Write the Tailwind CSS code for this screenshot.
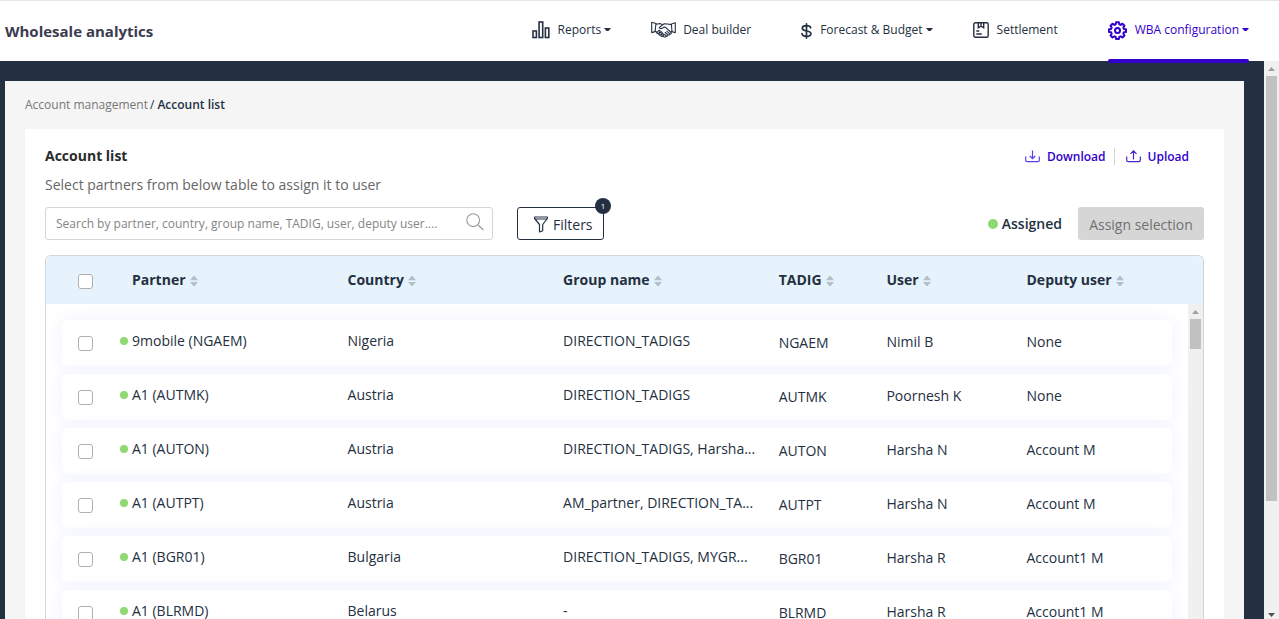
<!DOCTYPE html>
<html lang="en">
<head>
<meta charset="utf-8">
<title>Wholesale analytics</title>
<script src="https://cdn.jsdelivr.net/npm/@tailwindcss/browser@4"></script>
</head>
<body class="flex h-screen flex-col overflow-hidden bg-white font-['Open_Sans','Noto_Sans',sans-serif] text-sm text-[#243041]">
<header class="flex h-[61px] shrink-0 items-center justify-between border-t border-[#e1e8e8] pr-[30px] pl-[5px]">
  <h1 class="pt-0.5 text-[15px] font-bold text-[#3b3b50]">Wholesale analytics</h1>
  <nav class="flex h-full gap-10 pb-[3px] text-xs" aria-label="Main">
    <a href="#" class="flex items-center">
      <svg class="mr-2 size-[18px]" viewBox="0 0 18 18" fill="none" stroke="currentColor" stroke-width="1.6"><rect x="1" y="10" width="3.4" height="6.5"/><rect x="7.1" y="1" width="3.6" height="15.5"/><rect x="13.4" y="7" width="3.4" height="9.5"/></svg>
      Reports
      <svg class="ml-[3px] h-1 w-[7px]" viewBox="0 0 7 4"><path d="M0 0h7L4.5 3h-2z" fill="currentColor"/></svg>
    </a>
    <a href="#" class="flex items-center">
      <svg class="mr-[7px] h-[18px] w-[25px]" viewBox="0 0 25 18" fill="none" stroke="currentColor" stroke-width="1.1" stroke-linejoin="round" stroke-linecap="round"><path d="M.7 1.2 5 2.5 4 10.600.7 11.600zM24.300 1.800 20.400 3 21 10.800l3.300.8zM5 3.300 9 2.600 11 3.400M20.300 3.600 16.500 3 13.200 2.800 8.300 6.400c.4 1.800 2.500 1.600 4.600-.3l1.700.2 5.500 5.200c.6 1-.4 1.900-1.400 1.200l-2.800-2.400M4.200 10 6 11.500M18.600 12.500c.4 1.200-.7 1.900-1.700 1.200l-2.700-2.200M16.800 13.800c.2 1.200-.8 1.700-1.700 1l-2.200-1.700M15 14.900c-.1 1.100-1.100 1.500-2.100.8l-1-.8M20.200 11l1-1"/><path d="m6 11.500 1.600-1.800c1-.7 1.900.2 1.300 1.100l-1.300 1.600c-1 .8-2-.1-1.600-.9zm2 1.400 1.800-1.900c1-.5 1.700.4 1.200 1.200l-1.400 1.700c-1 .7-2-.2-1.600-1zm2.100 1.300 1.200-1.300c1-.4 1.600.4 1.100 1.200l-1 1.200c-.8.6-1.700-.1-1.300-1.100z"/></svg>
      Deal builder
    </a>
    <a href="#" class="ml-2.5 flex items-center">
      <svg class="mr-2 mt-0.5 h-4 w-[11px]" viewBox="0 0 11 16" fill="none" stroke="currentColor" stroke-width="1.7" stroke-linecap="round"><path d="M5.500.9v14.200M9.700 4.800C9.300 3.300 8 2.700 5.500 2.700c-2.700 0-4.200 1-4.200 2.600C1.300 7 2.800 7.500 5.500 8c2.800.5 4.400 1.100 4.400 2.700 0 1.700-1.600 2.600-4.400 2.600-2.800 0-4.300-.9-4.500-2.600"/></svg>
      Forecast &amp; Budget
      <svg class="ml-[3px] h-1 w-[7px]" viewBox="0 0 7 4"><path d="M0 0h7L4.500 3h-2z" fill="currentColor"/></svg>
    </a>
    <a href="#" class="flex items-center">
      <svg class="mr-2 size-4" viewBox="0 0 16 16" fill="none" stroke="currentColor" stroke-width="1.400"><rect x=".8" y=".8" width="14.400" height="14.400" rx="1.500"/><path d="M5.300 1v4.700L8 4.200l2.700 1.500V1M8 1v3M3.300 9h3M3.300 12h5.500"/></svg>
      Settlement
    </a>
    <a href="#" aria-current="page" class="relative ml-2.5 flex items-center text-[#3300cc]">
      <svg class="mr-2 mt-0.5 size-[19px]" viewBox="0 0 19 19" fill="none" stroke="currentColor" stroke-width="2" stroke-linejoin="round"><path d="M8.100 1.200h2.800l.4 2.100 1.400.6 1.800-1.200 2 2-1.200 1.800.6 1.400 2.100.4v2.600l-2.100.4-.6 1.400 1.200 1.800-2 2-1.800-1.200-1.400.6-.4 2.100H8.100l-.4-2.100-1.400-.6-1.800 1.200-2-2 1.200-1.800-.6-1.400-2.100-.4V8.300l2.100-.4.6-1.400-1.200-1.800 2-2 1.800 1.200 1.400-.6z"/><circle cx="9.500" cy="9.600" r="2.500"/></svg>
      WBA configuration
      <svg class="ml-[3px] h-1 w-[7px]" viewBox="0 0 7 4"><path d="M0 0h7L4.500 3h-2z" fill="currentColor"/></svg>
      <span class="absolute inset-x-0 -bottom-[5px] z-10 h-1 rounded-full bg-[#3300cc]"></span>
    </a>
  </nav>
</header>

<div class="flex min-h-0 flex-1 bg-[#243041]">
  <main class="flex min-w-0 flex-1 flex-col overflow-hidden pt-5 pr-5 pl-[5px]">
    <div class="flex min-h-0 flex-1 flex-col bg-[#f5f5f5] px-5 pt-3.5">
      <nav class="mb-[15px] flex h-[19px] text-xs leading-[19px]" aria-label="Breadcrumb"><a href="#" class="text-[#777]">Account management</a><span class="mr-[3px] ml-0.5">/</span><span class="font-semibold">Account list</span></nav>
      <section class="flex min-h-0 flex-1 flex-col bg-white px-5 pt-[17px]">
        <div class="flex items-center justify-between pr-[15px]">
          <h2 class="text-sm font-bold text-[#2b2b2b]">Account list</h2>
          <div class="flex items-center pt-0.5 text-xs font-semibold text-[#3300cc]">
            <a href="#" class="flex items-center gap-[7px]"><svg class="-mt-0.5 h-[13px] w-[15px]" viewBox="0 0 15 13" fill="none" stroke="#5540ee" stroke-width="1.200"><path d="M.7 6.500v3.700c0 .9.500 1.400 1.400 1.400h10.800c.9 0 1.400-.5 1.400-1.400V6.500M7.500.5v8M4.800 6l2.700 2.700L10.200 6"/></svg>Download</a>
            <span class="-mt-0.5 mr-[11px] ml-2 h-[17px] border-l border-[#d5d5d5]"></span>
            <a href="#" class="flex items-center gap-[7px]"><svg class="-mt-0.5 h-[13px] w-[15px]" viewBox="0 0 15 13" fill="none" stroke="#4a25cc" stroke-width="1.200"><path d="M.7 6.500v3.700c0 .9.500 1.400 1.400 1.400h10.800c.9 0 1.400-.5 1.400-1.400V6.500M7.500 9.500V1M4.500 3.800l3-3 3 3"/></svg>Upload</a>
          </div>
        </div>
        <p class="mt-[9px] text-sm text-[#666]">Select partners from below table to assign it to user</p>
        <div class="mt-3 flex h-[33px] shrink-0 items-center">
          <div class="relative h-full w-[448px]">
            <input type="text" aria-label="Search accounts" placeholder="Search by partner, country, group name, TADIG, user, deputy user...." class="h-full w-full rounded-[3px] border border-[#d5d5d5] pr-8 pl-2.5 text-xs placeholder:text-[#858585]">
            <svg class="absolute top-1.5 right-[9px] size-[18px]" viewBox="0 0 18 18" fill="none" stroke="#999" stroke-width="1.100"><circle cx="7.200" cy="7.200" r="6.400"/><path d="m12 12 5.500 5"/></svg>
          </div>
          <button class="relative ml-6 flex h-full w-[87px] items-center gap-[5px] rounded-[3px] border border-[#243041] pt-0.5 pl-4">
            <svg class="h-[17px] w-3.5" viewBox="0 0 14 17" fill="none" stroke="currentColor" stroke-width="1.200" stroke-linejoin="round"><path d="M.6 1h12.800v1.500L8.700 8.500v6.200L5.500 16V8.500L.6 2.500zM1.500 3h11"/></svg>
            Filters
            <span class="absolute -top-2.5 -right-2 flex size-4 items-center justify-center rounded-full bg-[#243041] text-[8px] text-white">1</span>
          </button>
          <span class="ml-auto flex items-center gap-1 font-semibold"><i class="size-2.5 rounded-full bg-[#8ed973]"></i>Assigned</span>
          <button disabled class="ml-4 h-full w-[126px] rounded-[3px] bg-[#d6d6d6] pt-0.5 text-sm text-[#707070]">Assign selection</button>
        </div>

        <table class="mt-[15px] flex min-h-0 flex-1 flex-col rounded-t-md border border-b-0 border-[#d5d5d5]">
          <thead class="block shrink-0 rounded-t-md bg-[#e6f3fc]">
            <tr id="head" class="mr-[31px] ml-4 grid h-12 grid-cols-[70px_200fr_200fr_200fr_100fr_130fr_135fr] items-center text-left"></tr>
          </thead>
          <tbody class="flex min-h-0 flex-1">
            <tr class="block min-w-0 flex-1"><td class="block h-full overflow-hidden">
              <table class="block px-4 pt-4">
                <tbody id="rows" class="flex flex-col gap-2"></tbody>
              </table>
            </td></tr>
            <tr class="block w-[15px] shrink-0 bg-[#f0f0f0]" aria-hidden="true"><td class="block">
              <svg class="h-[15px] w-[15px]" viewBox="0 0 15 15"><path d="M4 10h7L7.500 6z" fill="#a0a0a0"/></svg>
              <div class="mx-0.5 h-[30px] bg-[#c1c1c1]"></div>
            </td></tr>
          </tbody>
        </table>
      </section>
    </div>
  </main>
  <div class="flex w-[15px] shrink-0 flex-col bg-[#f0f0f0]" aria-hidden="true">
    <svg class="size-[15px]" viewBox="0 0 15 15"><path d="M4 10h7L7.500 6z" fill="#a0a0a0"/></svg>
    <div class="mx-0.5 h-[425px] bg-[#c1c1c1]"></div>
    <svg class="mt-auto size-[15px]" viewBox="0 0 15 15"><path d="M4 9h7l-3.500 4z" fill="#505050"/></svg>
  </div>
</div>

<script>
const box = label => `<input type="checkbox" aria-label="${label}" class="block size-[15px] appearance-none rounded-[3px] border border-[#b0b0b0] bg-white checked:bg-[#3300cc]">`;
const heads = ['Partner', 'Country', 'Group name', 'TADIG', 'User', 'Deputy user'];
document.getElementById('head').innerHTML =
  `<th class="pt-[3px] pl-4">${box('Select all')}</th>` +
  heads.map(h => `<th class="flex items-center gap-1 font-bold">${h}<svg class="mt-0.5 h-2.5 w-2" viewBox="0 0 8 10"><path d="M0 4.200h8L4.600 0h-1.200zM0 6h8L4.600 10h-1.200z" fill="#b3c0ca"/></svg></th>`).join('');
const data = [
  ['9mobile (NGAEM)', 'Nigeria', 'DIRECTION_TADIGS', 'NGAEM', 'Nimil B', 'None'],
  ['A1 (AUTMK)', 'Austria', 'DIRECTION_TADIGS', 'AUTMK', 'Poornesh K', 'None'],
  ['A1 (AUTON)', 'Austria', 'DIRECTION_TADIGS, Harsha...', 'AUTON', 'Harsha N', 'Account M'],
  ['A1 (AUTPT)', 'Austria', 'AM_partner, DIRECTION_TA...', 'AUTPT', 'Harsha N', 'Account M'],
  ['A1 (BGR01)', 'Bulgaria', 'DIRECTION_TADIGS, MYGR...', 'BGR01', 'Harsha R', 'Account1 M'],
  ['A1 (BLRMD)', 'Belarus', '-', 'BLRMD', 'Harsha R', 'Account1 M'],
];
document.getElementById('rows').innerHTML = data.map(r => `
  <tr class="relative grid h-[46px] grid-cols-[70px_200fr_200fr_200fr_100fr_130fr_135fr] items-center rounded-md bg-white shadow-[0_0_20px_#f0f2ff]">
    <td class="pl-4">${box('Select ' + r[0])}</td>
    <td class="-ml-3 flex items-center gap-1 pb-1"><i class="size-2 rounded-full bg-[#8ed973]"></i>${r[0]}</td>
    <td class="pb-1">${r[1]}</td>
    <td class="pb-1 whitespace-nowrap">${r[2]}</td>
    <td>${r[3]}</td>
    <td class="pb-0.5">${r[4]}</td>
    <td class="pb-0.5">${r[5]}</td>
  </tr>`).join('');
</script>
</body>
</html>
